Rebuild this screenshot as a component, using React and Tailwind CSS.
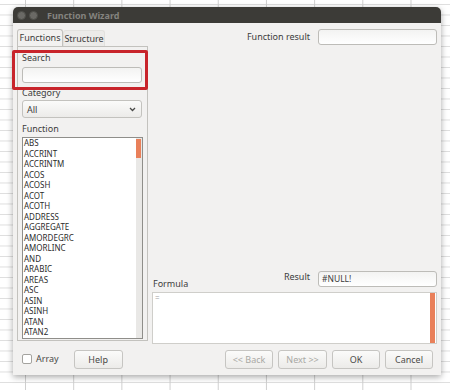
import React from "react";

const functions = [
  "ABS", "ACCRINT", "ACCRINTM", "ACOS", "ACOSH", "ACOT", "ACOTH", "ADDRESS",
  "AGGREGATE", "AMORDEGRC", "AMORLINC", "AND", "ARABIC", "AREAS", "ASC",
  "ASIN", "ASINH", "ATAN", "ATAN2",
];

const Button = ({ children, disabled, className = "" }) => (
  <button
    className={`h-[19px] rounded-[3px] border border-[#c6c5c2] bg-gradient-to-b from-[#fbfbfa] to-[#ecebe9] text-[9px] leading-none ${
      disabled ? "text-[#a9a8a4]" : "text-[#4a4a48]"
    } ${className}`}
  >
    {children}
  </button>
);

const Field = ({ value = "", className = "" }) => (
  <div
    className={`h-[16px] rounded-[3px] border border-[#bdbcb8] bg-gradient-to-b from-[#f3f3f2] to-white px-[3px] text-[8.5px] leading-[14px] text-[#3c3c3c] ${className}`}
  >
    {value}
  </div>
);

export default function App() {
  return (
    <div
      className="relative h-[390px] w-[450px] overflow-hidden bg-white font-['Noto_Sans',_sans-serif] [background-image:linear-gradient(to_right,#cfcfcf_1px,transparent_1px),linear-gradient(to_bottom,#dedede_1px,transparent_1px)] [background-position:25px_0,0_4px] [background-size:48.2px_100%,100%_10.5px]"
    >
      {/* dialog window */}
      <div className="absolute left-[13px] top-[7px] flex h-[368px] w-[428px] flex-col overflow-hidden rounded-t-[5px] bg-[#f2f1f0] shadow-[0_2px_6px_rgba(0,0,0,0.35)]">
        {/* title bar */}
        <div className="flex h-[16px] items-center gap-[3px] bg-[#3c3b37] pl-[4px]">
          <span className="h-[9px] w-[9px] rounded-full border border-[#4f4e4a] bg-[#6a6965]" />
          <span className="h-[9px] w-[9px] rounded-full border border-[#4f4e4a] bg-[#6a6965]" />
          <span className="ml-[6px] text-[9px] font-bold leading-none text-[#84837f]">
            Function Wizard
          </span>
        </div>

        {/* body */}
        <div className="flex flex-1 px-[4px] pt-[6px]">
          {/* left: tabs */}
          <div className="flex w-[131px] flex-col">
            <div className="flex h-[17px] items-end text-[9px] text-[#3c3c3c]">
              <div className="flex h-[17px] w-[46px] items-center justify-center rounded-t-[3px] border border-b-0 border-[#c3c2be] bg-[#f2f1f0]">
                Functions
              </div>
              <div className="flex h-[16px] w-[42px] items-center justify-center rounded-t-[3px] border border-b-0 border-[#e2e1de] bg-[#ecebe9]">
                Structure
              </div>
            </div>
            <div className="flex h-[295px] flex-col border border-[#c3c2be] px-[4px] text-[9px] leading-[11px] text-[#3c3c3c]">
              <div className="mt-[5px]">Search</div>
              <Field className="mt-[4px] w-[120px]" />
              <div className="mt-[4px]">Category</div>
              <div className="mt-[2px] flex h-[18px] w-[120px] items-center justify-between rounded-[3px] border border-[#c3c2be] bg-gradient-to-b from-[#fbfbfa] to-[#ecebe9] pl-[4px] pr-[5px]">
                <span className="text-[9px]">All</span>
                <svg width="7" height="5" viewBox="0 0 7 5">
                  <path d="M1 1l2.5 2.5L6 1" fill="none" stroke="#4a4a48" strokeWidth="1.3" />
                </svg>
              </div>
              <div className="mt-[5px]">Function</div>
              <div className="mt-[3px] flex h-[202px] w-[121px] border border-[#8f8e8a] bg-white">
                <div className="flex-1 pl-[1px] text-[8px] leading-[10.5px] text-[#2c2c2c]">
                  {functions.map((f) => (
                    <div key={f}>{f}</div>
                  ))}
                </div>
                <div className="w-[6px] bg-[#e9e8e6] pt-[1px]">
                  <div className="h-[19px] w-[5px] bg-[#e9805a]" />
                </div>
              </div>
            </div>
          </div>

          {/* right panel */}
          <div className="ml-[4px] flex flex-1 flex-col text-[9px] text-[#3c3c3c]">
            <div className="flex items-center justify-end gap-[8px]">
              <span>Function result</span>
              <Field className="w-[119px]" />
            </div>
            <div className="mt-[226px] flex items-end justify-between">
              <span className="mb-[-3px] ml-[1px]">Formula</span>
              <div className="flex items-center gap-[8px]">
                <span className="mt-[-4px]">Result</span>
                <Field value="#NULL!" className="w-[119px]" />
              </div>
            </div>
            <div className="mt-[5px] flex h-[52px] border border-[#cfceca] bg-white">
              <div className="flex-1 pl-[2px] text-[8px] leading-[10px] text-[#a2a29e]">=</div>
              <div className="mr-[1px] w-[5px] bg-[#e9805a]" />
            </div>
          </div>
        </div>

        {/* bottom buttons */}
        <div className="flex h-[30px] items-center pl-[9px] pr-[8px] pb-[2px] text-[9px] text-[#4a4a48]">
          <span className="h-[10px] w-[10px] rounded-[2px] border border-[#a4a39f] bg-white" />
          <span className="ml-[4px]">Array</span>
          <Button className="ml-[15px] w-[49px]">Help</Button>
          <div className="ml-auto flex gap-[5px]">
            <Button disabled className="w-[48px]">&lt;&lt; Back</Button>
            <Button disabled className="w-[49px]">Next &gt;&gt;</Button>
            <Button className="w-[48px]">OK</Button>
            <Button className="w-[48px]">Cancel</Button>
          </div>
        </div>
      </div>

      {/* red annotation box */}
      <div className="absolute left-[12px] top-[50px] h-[40px] w-[136px] rounded-[2px] border-[3px] border-[#c8242b]" />
    </div>
  );
}
